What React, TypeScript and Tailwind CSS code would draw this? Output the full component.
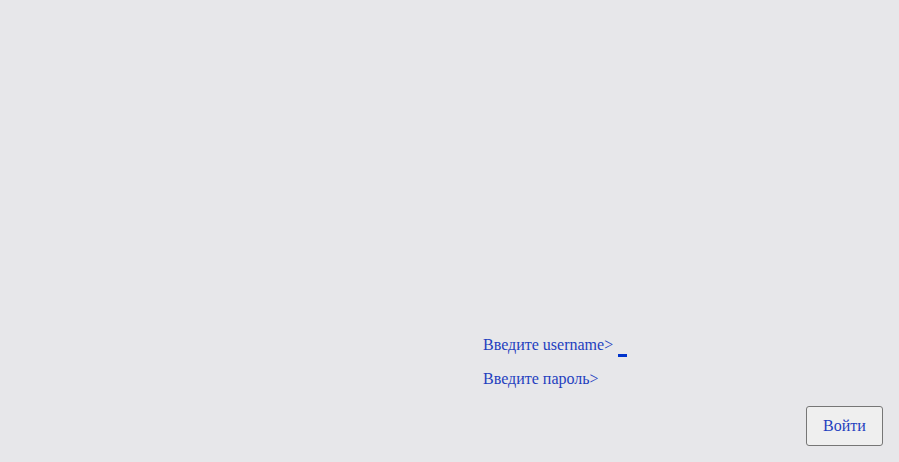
export default function App() {
  return (
    <div className="h-[462px] w-full bg-[#e7e7ea] flex flex-col justify-end font-['Liberation_Serif',serif] text-[16px] text-[#1f3fbf]">
      <div className="pl-[483px] flex flex-col">
        <div className="h-[34px] flex items-center">
          <span>Введите username&gt;</span>
          <span className="ml-[5px] mt-[21px] w-[9px] h-[3px] bg-[#0033cc]" />
        </div>
        <div className="h-[34px] flex items-center">
          <span>Введите пароль&gt;</span>
        </div>
      </div>
      <div className="flex justify-end pr-[16px] pb-[16px] mt-[10px]">
        <button className="h-[40px] w-[77px] bg-[#efefef] border border-[#767676] rounded-[3px] text-[#1f3fbf]">
          Войти
        </button>
      </div>
    </div>
  )
}
